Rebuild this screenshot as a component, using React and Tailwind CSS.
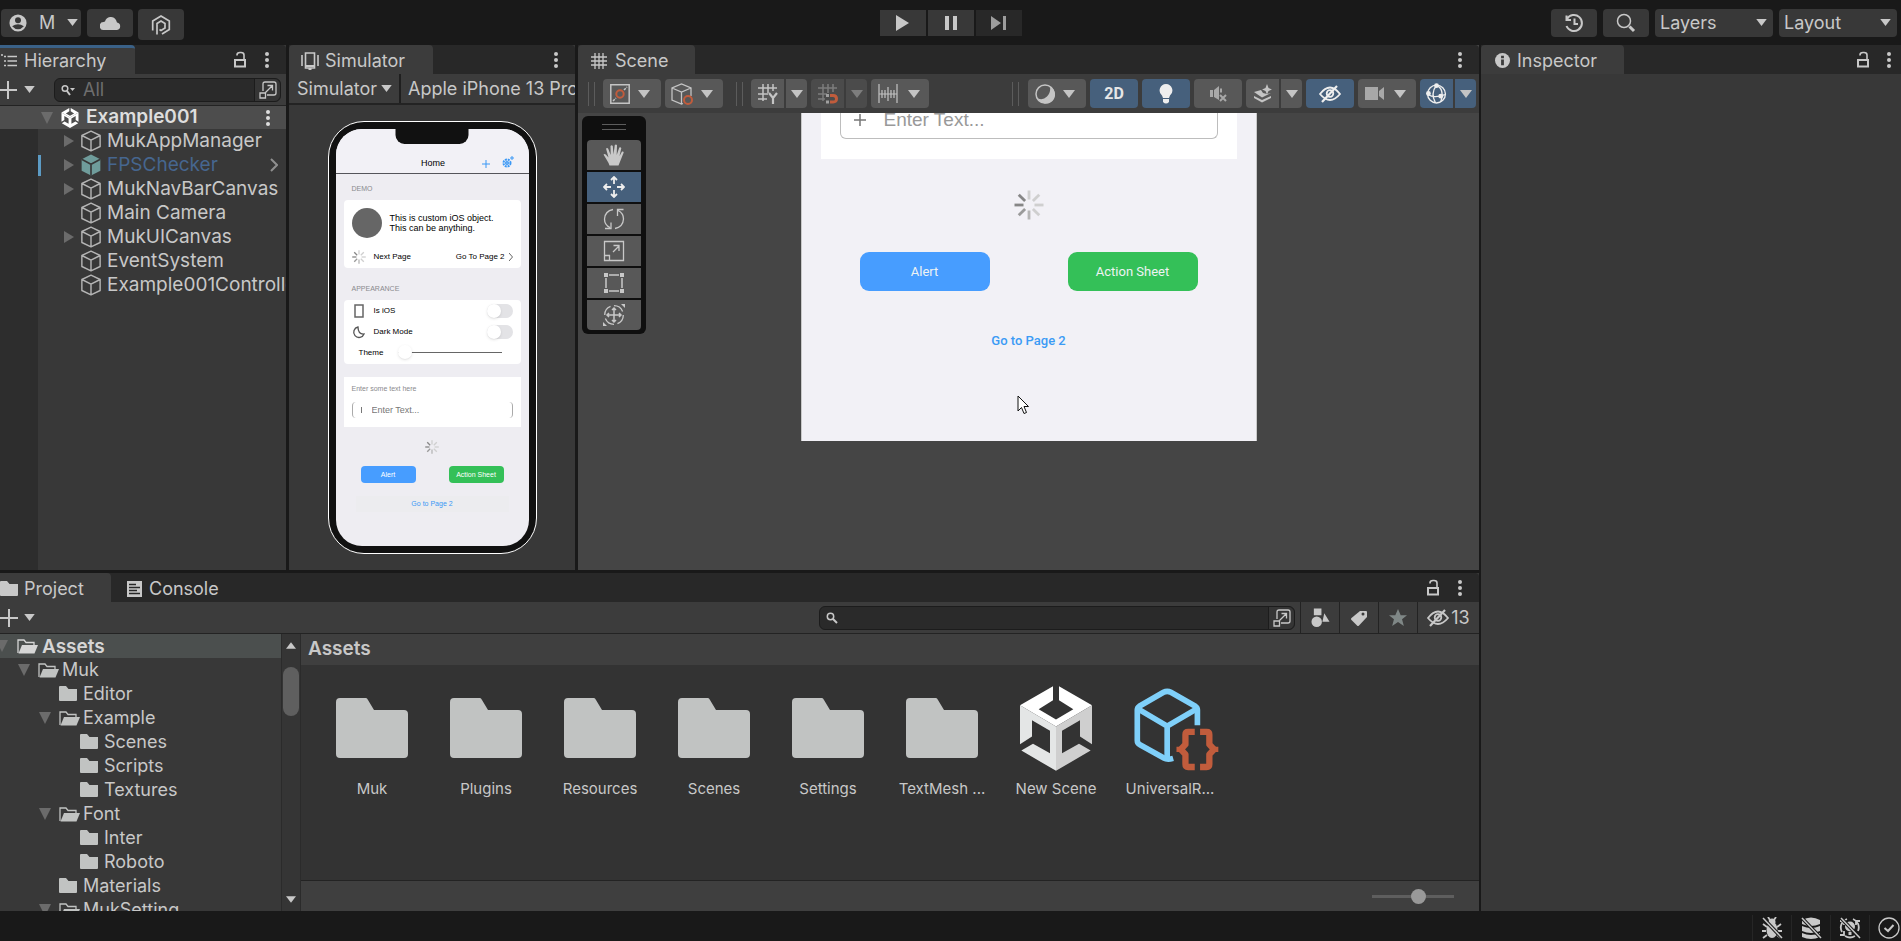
import React, { useState } from 'react'

const hierarchy = [
    { name: 'MukAppManager', open: true },
    { name: 'FPSChecker', open: true, prefab: true },
    { name: 'MukNavBarCanvas', open: true },
    { name: 'Main Camera' },
    { name: 'MukUICanvas', open: true },
    { name: 'EventSystem' },
    { name: 'Example001Controller' },
]

const tree = [
    { name: 'Muk', pad: 'pl-[18px]', open: true },
    { name: 'Editor', pad: 'pl-[39px]' },
    { name: 'Example', pad: 'pl-[39px]', open: true },
    { name: 'Scenes', pad: 'pl-[60px]' },
    { name: 'Scripts', pad: 'pl-[60px]' },
    { name: 'Textures', pad: 'pl-[60px]' },
    { name: 'Font', pad: 'pl-[39px]', open: true },
    { name: 'Inter', pad: 'pl-[60px]' },
    { name: 'Roboto', pad: 'pl-[60px]' },
    { name: 'Materials', pad: 'pl-[39px]' },
    { name: 'MukSetting', pad: 'pl-[39px]', open: true },
]

const folders = ['Muk', 'Plugins', 'Resources', 'Scenes', 'Settings', 'TextMesh ...']

/* ---------- icons ---------- */
function Svg({ box = '0 0 20 20', className = 'w-5 h-5', children, ...rest }) {
    return (
        <svg viewBox={box} className={'shrink-0 ' + className} fill="none" stroke="currentColor" strokeWidth="1.5" aria-hidden="true" {...rest}>
            {children}
        </svg>
    )
}

function Down({ className = 'w-[11px] h-[7px]' }) {
    return <Svg box="0 0 12 8" className={className}><path d="M0 0h12L6 8z" fill="currentColor" stroke="none" /></Svg>
}

function Fold({ open }) {
    return (
        <Svg box="0 0 12 12" className="w-3 h-3 text-[#6b6b6b]">
            <path d={open ? 'M0 0h12L6 12z' : 'M1 0l10 6-10 6z'} fill="currentColor" stroke="none" />
        </Svg>
    )
}

function Dots() {
    return (
        <Svg box="0 0 6 18" className="w-[6px] h-[18px]">
            <g fill="currentColor" stroke="none"><circle cx="3" cy="3" r="2" /><circle cx="3" cy="9" r="2" /><circle cx="3" cy="15" r="2" /></g>
        </Svg>
    )
}

function Lock() {
    return (
        <Svg box="0 0 14 18" className="w-[14px] h-[18px]" strokeWidth="2">
            <path d="M2 9h10v6.500H2z" /><path d="M4 4.500V4q0-2.500 3-2.500h1q3 0 3 2.500v5" strokeWidth="1.600" />
        </Svg>
    )
}

function Plus() {
    return <Svg box="0 0 18 18" className="w-[18px] h-[18px]" strokeWidth="2"><path d="M9 0v18M0 9h18" /></Svg>
}

function Cube({ prefab }) {
    if (prefab) {
        return (
            <Svg className="w-[22px] h-[22px] text-[#6f9c9b]">
                <path d="M10 .5l8.500 4.300v10.400L10 19.500l-8.500-4.300V4.800z" fill="currentColor" stroke="none" />
                <path d="M1.500 4.800L10 9.300l8.500-4.500M10 9.300v10.200" stroke="#383838" />
            </Svg>
        )
    }
    return (
        <Svg className="w-[22px] h-[22px]" strokeWidth="1.300">
            <path d="M10 1l8.300 4v10L10 19l-8.300-4V5zM1.700 5L10 9.300 18.300 5M10 9.300V19" strokeLinejoin="round" />
        </Svg>
    )
}

function UnityLogo({ className, flat }) {
    return (
        <Svg box="720 376 216 254" className={className} stroke="none">
            <path fill="#fff" d="M819 376v42l-43 27 52 31 52-31-43-27v-42l99 57-108 64-108-64z" />
            <path fill={flat ? '#fff' : '#e4e6e6'} d="M720 433l108 64v133l-104-61 35-20 51 28v-67l-54-32v49l-36 23z" />
            <path fill={flat ? '#fff' : '#cfcfcf'} d="M936 433l-108 64v133l104-61-35-20-51 28v-67l54-32v49l36 23z" />
        </Svg>
    )
}

function SmallFolder({ open }) {
    if (open) {
        return (
            <Svg box="0 0 21 16" className="w-[21px] h-4">
                <path d="M1 15V2h6l2 2.500h8V7" strokeWidth="1.300" /><path d="M5 7h16l-3.500 8.500H1.500z" fill="currentColor" stroke="none" />
            </Svg>
        )
    }
    return (
        <Svg box="0 0 18 15" className="w-[18px] h-[15px]" stroke="none">
            <path d="M0 1q0-1 1-1h6l2.500 3H18v11q0 1-1 1H1q-1 0-1-1z" fill="currentColor" />
        </Svg>
    )
}

function BigFolder() {
    return (
        <Svg box="0 0 72 60" className="w-[72px] h-[60px] text-[#c1c3c2]" stroke="none">
            <path d="M4 0h26q1 0 2 2l6 10h30q4 0 4 4v40q0 4-4 4H4q-4 0-4-4V4q0-4 4-4z" fill="currentColor" />
        </Svg>
    )
}

function PipelineIcon() {
    return (
        <Svg box="1024 376 292 256" className="w-[97px] h-[85px]">
            <g stroke="#7fd0fa" strokeWidth="17" strokeLinejoin="round">
                <path d="M1251 494v-46q0-7-6-11l-74-42q-11-6-22 0l-73 42q-6 4-6 11v92q0 9 8 13l72 40q10 6 28 1" />
                <path d="M1072 445l88 52 89-52M1160 497v95" />
            </g>
            <g stroke="#c15c3c" strokeWidth="19" strokeLinejoin="round">
                <path d="M1243 514h-20q-8 0-8 8v30l-14 15 14 15v30q0 8 8 8h20" /><path d="M1259 514h20q8 0 8 8v30l14 15-14 15v30q0 8-8 8h-20" />
                <path d="M1188 567h16M1298 567h16" strokeWidth="16" />
            </g>
        </Svg>
    )
}

function Magnifier({ menu }) {
    if (menu) {
        return (
            <Svg box="0 0 14 12" className="w-[14px] h-3">
                <circle cx="4" cy="4.500" r="2.800" /><path d="M6 7l3 4" strokeWidth="2" /><path d="M9 4h5l-2.500 3z" fill="currentColor" stroke="none" />
            </Svg>
        )
    }
    return <Svg box="0 0 12 12" className="w-3 h-3"><circle cx="4.500" cy="4.500" r="3.200" /><path d="M7 7l4 4" strokeWidth="2" /></Svg>
}

function Popout({ className = 'w-[18px] h-[18px]' }) {
    return (
        <Svg box="0 0 18 18" className={className} strokeWidth="1.300">
            <path d="M4 10V3q0-2 2-2h9q2 0 2 2v9q0 2-2 2H8" /><path d="M1 12h5.500v5H1zM6.500 11.500L13 5M8.500 4.500h5v5" />
        </Svg>
    )
}

function HiddenEye({ className = 'w-[22px] h-[18px]' }) {
    return (
        <Svg box="0 0 22 18" className={className} strokeWidth="1.800">
            <path d="M1 9q10-13 20 0-10 12-20 0z" /><circle cx="11" cy="8.500" r="3.300" /><path d="M3 17L18 1" strokeWidth="2.200" />
        </Svg>
    )
}

function Spinner({ className }) {
    const shades = ['#cfcfcf', '#cfcfcf', '#cfcfcf', '#cfcfcf', '#b5b5b5', '#9a9a9a', '#868686', '#868686']
    return (
        <Svg box="-15 -15 30 30" className={className} strokeWidth="2.800">
            {shades.map((c, i) => <path key={i} d="M0-5.500V-14.500" stroke={c} transform={`rotate(${i * 45})`} />)}
        </Svg>
    )
}

/* ---------- shared controls ---------- */
function DropDown({ label, value, className, arrow = 'right-3' }) {
    return (
        <div className={'relative flex items-center ' + className}>
            <select aria-label={label} className="appearance-none w-full h-full bg-transparent outline-none">
                <option>{value}</option>
            </select>
            <span className={'absolute pointer-events-none flex ' + arrow}><Down /></span>
        </div>
    )
}

function Tab({ icon, children, className }) {
    return (
        <button className={'flex items-center h-[29px] bg-[#3c3c3c] rounded-tr text-lg ' + className}>
            {icon}{children}
        </button>
    )
}

function TabBar({ children, lock }) {
    return (
        <div className="flex shrink-0 h-[29px] bg-[#282828] rounded-tr">
            {children}
            <div className="flex items-center gap-[17px] ml-auto pr-4">
                {lock && <button aria-label="Lock"><Lock /></button>}
                <button aria-label="Panel menu"><Dots /></button>
            </div>
        </div>
    )
}

function Tool({ label, on, dim, split, children, className = '' }) {
    const bg = on ? 'bg-[#46607c]' : dim ? 'bg-[#4b4b4b]' : 'bg-[#585858]'
    const color = dim ? 'text-[#7d7d7d]' : 'text-[#c4c4c4]'
    if (split) {
        return (
            <div className={'flex gap-[2px] h-[29px] ' + color}>
                <button aria-label={label} className={'flex items-center justify-center w-[33px] rounded-l-sm ' + bg}>{children}</button>
                <button aria-label={label + ' options'} className={'flex items-center justify-center w-[21px] rounded-r-sm ' + bg}><Down className="w-3 h-2" /></button>
            </div>
        )
    }
    return (
        <button aria-label={label} className={'flex items-center justify-center h-[29px] rounded-sm ' + bg + ' ' + color + ' ' + className}>
            {children}
        </button>
    )
}

function Handle() {
    return <div className="w-[7px] h-6 border-x border-[#5c5c5c]" />
}

/* ---------- panels ---------- */
function TopBar() {
    return (
        <header className="flex shrink-0 items-center h-[45px] pl-px pr-1 bg-[#191919] text-lg">
            <div className="flex flex-1 items-center gap-[5px]">
                <button className="flex items-center gap-3 h-7 w-20 pl-2 mr-px bg-[#383838] rounded-sm">
                    <Svg className="w-[18px] h-[18px]">
                        <circle cx="10" cy="10" r="9.500" fill="currentColor" stroke="none" />
                        <circle cx="10" cy="7" r="3.300" fill="#383838" stroke="none" /><path d="M3.500 13.500q6.500-4.500 13 0-6.500 7-13 0z" fill="#383838" stroke="none" />
                    </Svg>
                    M
                    <Down />
                </button>
                <button aria-label="Cloud" className="flex items-center justify-center h-7 w-[46px] bg-[#383838] rounded-sm">
                    <Svg box="0 0 21 15" className="w-[21px] h-[15px]" stroke="none"><path d="M4 15a4 4 0 0 1-.5-8L5 6.500A6 6 0 0 1 16 5l1 2.500a3.800 3.800 0 0 1 0 7.500z" fill="currentColor" /></Svg>
                </button>
                <button aria-label="Plastic SCM" className="flex items-center justify-center h-[31px] w-[46px] mt-1 bg-[#383838] rounded">
                    <Svg className="w-5 h-5" strokeWidth="1.700">
                        <path d="M1.700 15.500V6L10 1l8.300 5v8.500L11 19" /><path d="M6 19.500V8.500L10 6l4 2.500V13l-4 2.500L8.500 14.500" />
                    </Svg>
                </button>
            </div>
            <div className="flex items-center gap-[2px] ml-[3px]">
                <button aria-label="Play" className="flex items-center justify-center w-[46px] h-[26px] bg-[#383838]">
                    <Svg box="0 0 13 16" className="w-[13px] h-4" stroke="none"><path d="M0 0l13 8-13 8z" fill="currentColor" /></Svg>
                </button>
                <button aria-label="Pause" className="flex items-center justify-center w-[46px] h-[26px] bg-[#383838]">
                    <Svg box="0 0 12 16" className="w-3 h-4" stroke="none"><path d="M0 1h4v14H0zM8 1h4v14H8z" fill="currentColor" /></Svg>
                </button>
                <button aria-label="Step" className="flex items-center justify-center w-[46px] h-[26px] bg-[#282828] text-[#9d9d9d]">
                    <Svg box="0 0 15 16" className="w-[15px] h-4" stroke="none"><path d="M0 1l10 7-10 7zM12 1h3v14h-3z" fill="currentColor" /></Svg>
                </button>
            </div>
            <div className="flex flex-1 items-center justify-end gap-[6px]">
                <button aria-label="Undo history" className="flex items-center justify-center w-[46px] h-7 bg-[#383838] rounded-sm">
                    <Svg strokeWidth="2"><path d="M3 6a8 8 0 1 1-.5 7M2.500 2.500V7H7" /><path d="M10.500 5.500v5.500h3.500" /></Svg>
                </button>
                <button aria-label="Search" className="flex items-center justify-center w-[46px] h-7 bg-[#383838] rounded-sm">
                    <Svg><circle cx="8" cy="8" r="6.500" /><path d="M13.500 13.500L18 18" strokeWidth="3" /></Svg>
                </button>
                <DropDown label="Layers" value="Layers" className="w-[118px] h-7 pl-[5px] bg-[#383838] rounded-sm" arrow="right-[6px]" />
                <DropDown label="Layout" value="Layout" className="w-[118px] h-7 pl-[5px] bg-[#383838] rounded-sm" arrow="right-[6px]" />
            </div>
        </header>
    )
}

function Hierarchy() {
    return (
        <section className="flex flex-col shrink-0 w-[286px] bg-[#383838] overflow-hidden">
            <TabBar lock>
                <Tab className="w-[135px] gap-[7px] border-t-3 border-[#3a6187]" icon={
                    <Svg box="0 0 17 14" className="w-[17px] h-[14px]" strokeWidth="1.600"><path d="M1 1h2M4 2.500h2M7.500 2.500H17M4 7h2M7.500 7H17M4 11.500h2M7.500 11.500H17" /></Svg>
                }>Hierarchy</Tab>
            </TabBar>
            <div className="flex shrink-0 items-center h-8 pr-[5px] bg-[#3c3c3c] border-b border-[#232323]">
                <button aria-label="Add object" className="flex items-center gap-[7px] w-[54px] -ml-px mr-px"><Plus /><Down /></button>
                <div className="flex flex-1 items-center h-6 min-w-0 pl-[6px] bg-[#2a2a2a] border border-[#1c1c1c] rounded-md">
                    <Magnifier menu />
                    <input type="text" aria-label="Search hierarchy" placeholder="All" className="flex-1 min-w-0 pl-2 bg-transparent text-lg/6 placeholder:text-[#6e6e6e] outline-none" />
                    <button aria-label="Open search" className="flex items-center justify-center w-[26px] h-full bg-[#353535] border-l border-[#1c1c1c] rounded-r-md"><Popout /></button>
                </div>
            </div>
            <div className="flex shrink-0 items-center h-[23px] pl-[41px] pr-[15px] bg-[#4d4d4d] text-[19px] font-semibold text-[#dedede]">
                <Fold open />
                <UnityLogo flat className="w-[18px] h-5 ml-2 mr-[7px]" />
                <span className="flex-1">Example001</span>
                <button aria-label="Scene menu"><Dots /></button>
            </div>
            <ul className="flex-1 border-l-38 border-[#2d2d2d] text-[19px]">
                {hierarchy.map((item) => (
                    <li key={item.name} className={'relative flex items-center h-6 pl-[25px] pr-2 ' + (item.prefab ? 'text-[#46668f]' : '')}>
                        {item.prefab && <span className="absolute left-0 h-[21px] w-[3px] bg-[#5c9bc4]" />}
                        <span className="flex w-[17px] shrink-0">{item.open && <Fold />}</span>
                        <span className={item.prefab ? '' : 'text-[#b4b4b4]'}><Cube prefab={item.prefab} /></span>
                        <span className="flex-1 ml-[5px] -mr-2 overflow-hidden whitespace-nowrap">{item.name}</span>
                        {item.prefab && <Svg box="0 0 8 14" className="w-2 h-[14px] text-[#8f8f8f]" strokeWidth="2"><path d="M1 1l6 6-6 6" /></Svg>}
                    </li>
                ))}
            </ul>
        </section>
    )
}

function Phone() {
    const [ios, setIos] = useState(false)
    const [dark, setDark] = useState(false)
    const toggle = 'appearance-none w-[26px] h-[14px] rounded-full bg-[#e3e3e6] before:block before:w-[14px] before:h-[14px] before:rounded-full before:bg-white before:shadow checked:bg-green-500'
    return (
        <div className="w-[209px] h-[433px] p-[7px] mx-auto mt-4 rounded-[36px] border border-white bg-[#111] text-black text-[9px]/[10px] font-['Liberation_Sans',sans-serif]">
            <div className="relative flex flex-col h-full rounded-[26px] bg-[#eeedf2] overflow-hidden">
                <div className="absolute top-0 left-1/2 -translate-x-1/2 w-[73px] h-[15px] rounded-b-[9px] bg-[#111]" />
                <div className="flex items-end h-[45px] px-[21px] pb-[5px] bg-[#f2f1f6] border-b border-[#55555a]">
                    <span className="flex-1 pl-14 text-center">Home</span>
                    <button aria-label="Add" className="ml-7 mr-3 text-[#3b98f5]"><Svg box="0 0 8 8" className="w-2 h-2" strokeWidth="1"><path d="M4 0v8M0 4h8" /></Svg></button>
                    <button aria-label="Settings" className="-mr-[6px] text-[#3b98f5]">
                        <Svg box="0 0 12 12" className="w-3 h-3"><circle cx="5" cy="7" r="3.500" strokeWidth="2" strokeDasharray="2 .8" /><circle cx="5" cy="7" r="1.300" /><path d="M10 0v4M8 2h4" strokeWidth="1" /></Svg>
                    </button>
                </div>
                <div className="px-2">
                    <p className="mt-[10px] pl-2 text-[7px]/[10px] text-[#8a8a8e]">DEMO</p>
                    <div className="mt-[6px] px-2 pt-2 h-[68px] rounded bg-white">
                        <div className="flex items-center gap-2">
                            <div className="w-[30px] h-[30px] rounded-full bg-[#666]" />
                            <p>This is custom iOS object.<br />This can be anything.</p>
                        </div>
                        <div className="flex items-center mt-3">
                            <Spinner className="w-[14px] h-[14px]" />
                            <span className="ml-2 text-[8px]/[10px]">Next Page</span>
                            <a href="#page2" className="flex items-center gap-1 ml-auto text-[8px]/[10px]">Go To Page 2
                                <Svg box="0 0 4 8" className="w-1 h-2 text-[#666]" strokeWidth="1"><path d="M0 0l3.500 4L0 8" /></Svg>
                            </a>
                        </div>
                    </div>
                    <p className="mt-4 pl-2 text-[7px]/[10px] text-[#8a8a8e]">APPEARANCE</p>
                    <div className="mt-[6px] px-2 h-16 rounded bg-white text-[8px]/[10px]">
                        <label className="flex items-center h-[21px]">
                            <Svg box="0 0 14 14" className="w-[14px] h-[14px] mr-2 text-[#666]"><path d="M3 1h8v12H3z" /></Svg>
                            Is iOS
                            <input type="checkbox" className={toggle + ' ml-auto'} checked={ios} onChange={(e) => setIos(e.target.checked)} />
                        </label>
                        <label className="flex items-center h-[21px]">
                            <Svg box="0 0 14 14" className="w-[14px] h-[14px] mr-2 text-[#555]" strokeWidth="1.300"><path d="M6 2a5.300 5.300 0 1 0 6 7Q6 9.500 6 2z" /></Svg>
                            Dark Mode
                            <input type="checkbox" className={toggle + ' ml-auto'} checked={dark} onChange={(e) => setDark(e.target.checked)} />
                        </label>
                        <label className="flex items-center h-[21px] pl-[7px] pr-[11px]">
                            <span className="w-[39px]">Theme</span>
                            <input type="range" defaultValue="0" className="appearance-none flex-1 min-w-0 h-[14px] bg-transparent [&::-webkit-slider-runnable-track]:h-px [&::-webkit-slider-runnable-track]:bg-[#666] [&::-webkit-slider-thumb]:appearance-none [&::-webkit-slider-thumb]:w-[14px] [&::-webkit-slider-thumb]:h-[14px] [&::-webkit-slider-thumb]:-mt-[7px] [&::-webkit-slider-thumb]:rounded-full [&::-webkit-slider-thumb]:bg-white [&::-webkit-slider-thumb]:shadow" />
                        </label>
                    </div>
                    <div className="mt-[13px] px-2 pt-[7px] h-[50px] bg-white">
                        <label htmlFor="phone-text" className="block text-[7px]/[10px] text-[#8a8a8e]">Enter some text here</label>
                        <div className="flex items-center mt-2 h-4 px-[7px] rounded border-x border-[#aaa] text-[#777]">
                            <Svg box="0 0 4 6" className="w-1 h-[6px] mr-2" strokeWidth="1"><path d="M1.500 0v6" /></Svg>
                            <input id="phone-text" type="text" placeholder="Enter Text..." className="flex-1 min-w-0 bg-transparent text-[9px]/[10px] placeholder:text-[#777] outline-none" />
                        </div>
                    </div>
                    <Spinner className="w-[14px] h-[14px] mx-auto mt-[13px]" />
                    <div className="flex justify-between mt-3 px-[17px] text-[7px]/[10px] text-white">
                        <button className="w-[55px] h-[17px] rounded bg-[#479dff]">Alert</button>
                        <button className="w-[55px] h-[17px] rounded bg-[#34c058]">Action Sheet</button>
                    </div>
                    <button className="block w-[153px] h-4 mx-auto mt-[13px] bg-[#ececef] text-[7px]/[10px] text-[#3b98f5]">Go to Page 2</button>
                </div>
            </div>
        </div>
    )
}

function Simulator() {
    return (
        <section className="flex flex-col shrink-0 w-[286px] bg-[#383838] overflow-hidden">
            <TabBar>
                <Tab className="w-36 pl-3 pt-[2px] gap-[6px] rounded-t" icon={
                    <Svg box="0 0 18 18" className="w-[18px] h-[18px]" strokeWidth="1.600"><path d="M4.500 1h9v15h-9zM1 3v11M17 3v11" /><path d="M5 14h8M7.500 17h3" strokeWidth="2" /></Svg>
                }>Simulator</Tab>
            </TabBar>
            <div className="flex shrink-0 h-[31px] bg-[#3c3c3c] border-b-2 border-[#232323] text-lg">
                <DropDown label="View" value="Simulator" className="shrink-0 w-[112px] pl-2 border-r-2 border-[#1f1f1f]" arrow="right-[7px]" />
                <DropDown label="Device" value="Apple iPhone 13 Pro Max" className="shrink-0 w-[240px] pl-[7px]" />
            </div>
            <Phone />
        </section>
    )
}

function SceneTools() {
    const tools = [
        ['Hand', <path d="M6.500 21.500q-1-3-3-6L.5 10.500q1.300-1.200 2.500.3L5.500 13.500 3 4.500q1.500-1.200 2.200.3L7.700 11 7.500 2q1.200-1.300 2.300 0L10.500 10.500 11.800 1q1.500-1 2.200.3L13.700 11 16.300 3.500q1.500-.7 2 .7L16.500 12 19 7.500q1.700-.3 1.700 1L17.500 16.500 15.500 21.500z" fill="currentColor" stroke="none" />],
        ['Move', <path d="M11 8V1M8 4l3-3 3 3M11 14v7M8 18l3 3 3-3M8 11H1M4 8l-3 3 3 3M14 11h7M18 8l3 3-3 3" strokeWidth="1.800" />],
        ['Rotate', <path d="M10 1.500Q2 3 1.500 11q0 6 5.500 8.500M8 14.500v6H2M12 20.500q8-1.500 8.500-9.500 0-6-5.500-8.500M14.500 8V1.500H20.500" strokeWidth="1.300" />],
        ['Scale', <path d="M1.500 1.500h19v19h-19zM1.500 15.500h5v5M10 12l6-6M10.500 5.500H16V11" strokeWidth="1.300" />],
        ['Rect', <><path d="M6 3h10M6 19h10M3 6v10M19 6v10" strokeWidth="1.500" /><path d="M1 1h4v4H1zM17 1h4v4h-4zM1 17h4v4H1zM17 17h4v4h-4z" fill="currentColor" stroke="none" /></>],
        ['Transform', <><circle cx="11" cy="11" r="9.300" strokeWidth="1.300" strokeDasharray="11 3.500" /><path d="M11 4v14M4 11h14M9 6l2-2 2 2M9 16l2 2 2-2M6 9l-2 2 2 2M16 9l2 2-2 2" /><path d="M18 0h4v4zM0 18v4h4z" fill="currentColor" stroke="none" /></>],
    ]
    return (
        <div className="absolute left-1 top-[3px] flex flex-col items-center gap-[2px] w-16 pt-2 pb-1 bg-[#0f0f0f] rounded-md">
            <div className="w-6 h-[6px] mb-2 border-y border-[#5c5c5c]" />
            {tools.map(([name, art]) => (
                <button key={name} aria-label={name} className={'flex items-center justify-center w-[54px] h-[30px] first-of-type:rounded-t last-of-type:rounded-b ' + (name === 'Move' ? 'bg-[#46607c] text-[#eee]' : 'bg-[#585858]')}>
                    <Svg box="0 0 22 22" className="w-[22px] h-[22px]">{art}</Svg>
                </button>
            ))}
        </div>
    )
}

function Scene() {
    return (
        <section className="flex flex-col flex-1 min-w-0 bg-[#454545] overflow-hidden">
            <TabBar>
                <Tab className="w-[117px] pl-[13px] pt-[2px] gap-2 rounded-t" icon={
                    <Svg box="0 0 16 16" className="w-4 h-4" strokeWidth="1.300"><path d="M4 0v16M8 0v16M12 0v16M0 4h16M0 8h16M0 12h16" /></Svg>
                }>Scene</Tab>
            </TabBar>
            <div className="flex shrink-0 items-center gap-1 h-[39px] pl-1 pr-[3px] bg-[#3c3c3c]">
                <div className="flex items-center gap-1 pl-[6px]">
                    <Handle />
                    <Tool label="Pivot" className="w-[58px] gap-2 pr-1 ml-1">
                        <Svg><path d="M.8.800h18.400v18.400H.8z" /><path d="M3 17l3-3M14 6l3-3" strokeDasharray="2.500 1" /><circle cx="10" cy="10" r="3.700" stroke="#c15c3c" strokeWidth="2" /></Svg><Down className="w-3 h-2" />
                    </Tool>
                    <Tool label="Orientation" className="w-[58px] gap-2 pr-1">
                        <Svg box="0 0 22 22" className="w-[22px] h-[22px]" strokeWidth="1.300"><path d="M12 20.500L10.500 21 1 17V5l9.500-4L20 5v8M1 5l9.500 4L20 5M10.500 9v12" /><circle cx="17" cy="17" r="4" stroke="#c15c3c" strokeWidth="2" /></Svg><Down className="w-3 h-2" />
                    </Tool>
                    <div className="ml-[9px] mr-1"><Handle /></div>
                    <Tool split label="Grid">
                        <Svg><path d="M5 0v17M10 0v9M15 0v7M0 4h19M0 10h10M0 15h9" /><path d="M11 9l4 5 4-5M15 14v6" strokeWidth="2.200" /></Svg>
                    </Tool>
                    <Tool split dim label="Snap">
                        <Svg><path d="M5 0v17M10 0v9M15 0v8M0 4h19M0 10h9M0 15h7" /><path d="M8 11.500h3M8 18h3" strokeWidth="3" stroke="#a0a0a0" /><path d="M12 11.500h3q3.500 0 3.500 3.300T15 18h-3" stroke="#c15c3c" strokeWidth="3" /></Svg>
                    </Tool>
                    <Tool label="Increment" className="w-[58px] gap-[10px] pr-[2px]">
                        <Svg strokeWidth="1.200"><path d="M1 0v19M19 0v19M1 10h18M4 6v8M7 6v8M10 3v14M13 6v8M16 6v8" /></Svg><Down className="w-3 h-2" />
                    </Tool>
                </div>
                <div className="flex items-center gap-1 ml-auto">
                    <Handle />
                    <Tool label="Draw mode" className="w-[58px] gap-2 pr-1 ml-[5px]">
                        <Svg><circle cx="10" cy="10" r="9" /><path d="M15 2.500a9 9 0 1 1-12 12q5 2 9-2t3-10z" fill="currentColor" stroke="none" /></Svg><Down className="w-3 h-2" />
                    </Tool>
                    <Tool on label="2D" className="w-12 text-base font-bold"><span className="text-[#e6e6e6] font-['Roboto',sans-serif]">2D</span></Tool>
                    <Tool on label="Lighting" className="w-12">
                        <Svg box="0 0 14 20" className="w-[14px] h-5 text-[#eee]" stroke="none"><path d="M7 0a6.500 6.500 0 0 1 4 11.500L10 14H4l-1-2.500A6.500 6.500 0 0 1 7 0zM4 15h6v3q-3 3-6 0z" fill="currentColor" /></Svg>
                    </Tool>
                    <Tool label="Audio" className="w-12">
                        <Svg box="0 0 18 16" className="w-[18px] h-4 text-[#a8a8a8]"><path d="M1 4h3v7H1zM5 4l5-4v14l-5-3z" fill="currentColor" stroke="none" /><path d="M12 2.500v4M11 9l6 6M17 9l-6 6" strokeWidth="2" /></Svg>
                    </Tool>
                    <Tool split label="Effects">
                        <Svg stroke="none"><path d="M1 8l7-2 2 3 4 1 4-1-9 4.500zM1 12l8 4 9-4v2l-9 4.500L1 14z" fill="currentColor" /><path d="M14 0l1.500 4L19 5.500 15.500 7 14 10.500 12.500 7 9 5.500 12.500 4z" fill="currentColor" /></Svg>
                    </Tool>
                    <Tool on label="Visibility" className="w-12"><span className="text-[#eee]"><HiddenEye /></span></Tool>
                    <Tool label="Camera" className="w-[58px] gap-[10px] pr-1">
                        <Svg box="0 0 19 13" className="w-[19px] h-[13px] text-[#a8a8a8]" stroke="none"><path d="M0 0h13v13H0zM14 4l5-4v13l-5-4z" fill="currentColor" /></Svg><Down className="w-3 h-2" />
                    </Tool>
                    <Tool split on label="Gizmos">
                        <Svg className="w-[21px] h-[21px] text-[#eee]" strokeWidth="1.300"><circle cx="10" cy="10.500" r="8.500" /><path d="M10 2q-6 8-1 17M10 2q8 4 4 16M2 11q6 4 16 0" /><g fill="currentColor" stroke="none"><circle cx="10" cy="2.500" r="2.300" /><circle cx="2.300" cy="10" r="2.300" /><circle cx="14" cy="12.500" r="2.300" /></g></Svg>
                    </Tool>
                </div>
            </div>
            <div className="relative flex-1 overflow-hidden">
                <SceneTools />
                <div className="w-[456px] h-[328px] mx-auto px-[19px] bg-[#f2f1f6] border-x border-[#c9c9c9] text-[13px]/5">
                    <div className="h-[46px] px-[19px] bg-white">
                        <div className="flex items-center h-[26px] px-[13px] pb-3 border border-t-0 border-[#bdbdbd] rounded-b-md">
                            <Svg box="0 0 12 12" className="w-3 h-3 text-[#777]"><path d="M6 0v12M0 6h12" /></Svg>
                            <input type="text" aria-label="Enter Text" placeholder="Enter Text..." className="flex-1 min-w-0 pl-[18px] bg-transparent text-[19px]/5 placeholder:text-[#999] outline-none font-['Liberation_Sans',sans-serif]" />
                        </div>
                    </div>
                    <Spinner className="w-[30px] h-[30px] mx-auto mt-[31px]" />
                    <div className="flex justify-between mt-8 px-[39px] text-[#eef3f3] font-['Roboto',sans-serif]">
                        <button className="w-[130px] h-[39px] rounded-[9px] bg-[#479dff]">Alert</button>
                        <button className="w-[130px] h-[39px] rounded-[9px] bg-[#34c058]">Action Sheet</button>
                    </div>
                    <button className="block mx-auto mt-10 font-medium text-[#3b9bf5] font-['Roboto',sans-serif]">Go to Page 2</button>
                </div>
                <svg viewBox="0 0 12 20" className="absolute left-[439px] top-[282px] w-3 h-5" aria-hidden="true">
                    <path d="M1 1v15l3.500-3.500L7 18.500l2.500-1-2.500-6h4.500z" fill="#fff" stroke="#111" />
                </svg>
            </div>
        </section>
    )
}

function Project() {
    const [size, setSize] = useState(58)
    const cell = 'flex items-center justify-center h-[31px] border-l border-[#232323]'
    return (
        <section className="flex flex-col shrink-0 h-[338px] bg-[#383838] overflow-hidden">
            <TabBar lock>
                <Tab className="w-[111px] pt-[2px] gap-[6px]" icon={<SmallFolder />}>Project</Tab>
                <button className="flex items-center gap-[7px] pl-4 pt-[2px] text-lg">
                    <Svg box="0 0 15 16" className="w-[15px] h-4" stroke="none"><path d="M0 0h15v16H0z" fill="currentColor" /><path d="M2 3.500h7M2 6.500h11M2 9.500h8M2 12.500h11" stroke="#282828" strokeWidth="1.300" /></Svg>
                    Console
                </button>
            </TabBar>
            <div className="flex shrink-0 items-center h-8 bg-[#3c3c3c] border-b border-[#232323]">
                <button aria-label="Create asset" className="flex items-center gap-[6px]"><Plus /><Down /></button>
                <div className="flex items-center w-[476px] h-6 ml-auto mr-[5px] pl-[6px] bg-[#2a2a2a] border border-[#1c1c1c] rounded-md">
                    <Magnifier />
                    <input type="text" aria-label="Search project" className="flex-1 min-w-0 pl-2 bg-transparent text-lg/6 outline-none" />
                    <button aria-label="Open search" className="flex items-center justify-center w-[26px] h-full bg-[#353535] border-l border-[#1c1c1c] rounded-r-md"><Popout /></button>
                </div>
                <button aria-label="Search by type" className={cell + ' w-[39px]'}>
                    <Svg className="w-[19px] h-5" stroke="none"><path d="M3 0h8v7H3zM14 5l5.500 9H12z" fill="currentColor" /><circle cx="6" cy="14" r="5.500" fill="currentColor" /></Svg>
                </button>
                <button aria-label="Search by label" className={cell + ' w-[39px]'}>
                    <Svg box="0 0 16 16" className="w-4 h-4" stroke="none"><path d="M9 1h6q1 0 1 1v5l-8 8.500q-1 1-2 0L.5 10q-1-1 0-2z" fill="currentColor" /><circle cx="12" cy="4" r="1.500" fill="#3c3c3c" /></Svg>
                </button>
                <button aria-label="Save search" className={cell + ' w-[39px]'}>
                    <Svg className="w-[18px] h-[18px] text-[#7f8786]" stroke="none"><path d="M10 0l3 7h7l-5.500 4.500L16.500 19 10 14.500 3.500 19l2-7.500L0 7h7z" fill="currentColor" /></Svg>
                </button>
                <button aria-label="Hidden packages" className={cell + ' w-[62px] gap-[2px] text-lg'}><HiddenEye />13</button>
            </div>
            <div className="flex flex-1 min-h-0">
                <div className="w-[281px] overflow-hidden text-lg/[23px]">
                    <div className="flex items-center h-6 bg-[#4b4f4e] text-[19px]/[23px] font-semibold text-[#d6d6d6]">
                        <span className="flex w-[17px] -ml-1 mr-1"><Fold open /></span>
                        <SmallFolder open />
                        <span className="ml-1">Assets</span>
                    </div>
                    <ul>
                        {tree.map((node) => (
                            <li key={node.name} className={'flex items-center h-6 pb-px ' + node.pad}>
                                <span className="flex w-5 shrink-0">{node.open && <Fold open />}</span>
                                <span className="flex w-[21px] mr-[3px] text-[#c1c3c2]"><SmallFolder open={node.open} /></span>
                                {node.name}
                            </li>
                        ))}
                    </ul>
                </div>
                <div className="flex flex-col items-center w-5 py-2 border-x border-[#2b2b2b] bg-[#353535]">
                    <Svg box="0 0 12 8" className="w-[10px] h-[7px]" stroke="none"><path d="M0 8h12L6 0z" fill="currentColor" /></Svg>
                    <div className="w-4 h-[49px] mt-[18px] rounded-full bg-[#5f5f5f]" />
                    <span className="flex mt-auto"><Down className="w-[10px] h-[7px]" /></span>
                </div>
                <div className="flex flex-col flex-1 min-w-0">
                    <div className="flex items-center h-[31px] pl-[7px] bg-[#3f3f3f] text-[19px] font-semibold">Assets</div>
                    <ul className="flex flex-wrap content-start flex-1 min-h-0 pl-[14px] pt-5 bg-[#333] text-[15px]/5">
                        {folders.map((name) => (
                            <li key={name} className="flex flex-col items-center w-[114px]">
                                <span className="flex items-center h-[86px]"><BigFolder /></span>
                                <span className="mt-2">{name}</span>
                            </li>
                        ))}
                        <li className="flex flex-col items-center w-[114px]">
                            <span className="flex items-center h-[86px]"><UnityLogo className="w-[72px] h-[85px]" /></span>
                            <span className="mt-2">New Scene</span>
                        </li>
                        <li className="flex flex-col items-center w-[114px]">
                            <span className="flex items-center h-[86px]"><PipelineIcon /></span>
                            <span className="mt-2">UniversalR...</span>
                        </li>
                    </ul>
                    <div className="flex shrink-0 items-center justify-end h-[31px] pr-[25px] bg-[#3f3f3f] border-t border-[#232323]">
                        <input type="range" aria-label="Icon size" value={size} onChange={(e) => setSize(e.target.value)} className="appearance-none w-[82px] h-4 bg-transparent [&::-webkit-slider-runnable-track]:h-[3px] [&::-webkit-slider-runnable-track]:bg-[#5e5e5e] [&::-webkit-slider-thumb]:appearance-none [&::-webkit-slider-thumb]:w-[15px] [&::-webkit-slider-thumb]:h-[15px] [&::-webkit-slider-thumb]:-mt-[6px] [&::-webkit-slider-thumb]:rounded-full [&::-webkit-slider-thumb]:bg-[#999]" />
                    </div>
                </div>
            </div>
        </section>
    )
}

function Inspector() {
    return (
        <aside className="flex flex-col shrink-0 w-[420px] bg-[#383838]">
            <div className="flex shrink-0 h-[29px] bg-[#282828]">
                <Tab className="w-[143px] pl-[14px] pt-[2px] gap-[7px] rounded-t" icon={
                    <Svg box="0 0 16 16" className="w-[15px] h-[15px]" stroke="none"><circle cx="8" cy="8" r="8" fill="currentColor" /><path d="M6.500 3h3v2.500h-3zM6.500 7h3v6h-3z" fill="#3c3c3c" /></Svg>
                }>Inspector</Tab>
                <div className="flex items-center gap-4 ml-auto pr-[9px]">
                    <button aria-label="Lock"><Lock /></button>
                    <button aria-label="Panel menu"><Dots /></button>
                </div>
            </div>
        </aside>
    )
}

function StatusBar() {
    const cell = 'flex items-center justify-center w-[39px] h-full border-l border-[#262626]'
    return (
        <footer className="flex shrink-0 justify-end items-end h-[30px] pt-1 bg-[#191919] overflow-hidden">
            <button aria-label="Debugger" className={cell}>
                <Svg box="0 0 22 22" className="w-[22px] h-[22px]">
                    <ellipse cx="11" cy="13" rx="5.500" ry="8" fill="currentColor" stroke="none" /><circle cx="11" cy="5" r="3.500" fill="currentColor" stroke="none" />
                    <path d="M7 0l2 3M15 0l-2 3M6 10L2 7M5 14H1M6 18l-4 3M16 10l4-3M17 14h4M16 18l4 3" strokeWidth="1.800" />
                    <path d="M2 1l19 20" stroke="#191919" strokeWidth="3.500" /><path d="M2 1l19 20" />
                </Svg>
            </button>
            <button aria-label="Cache server" className={cell}>
                <Svg box="0 0 22 22" className="w-[22px] h-[22px]">
                    <path d="M2 3q9-5 18 0v4q-9 4-18 0zM2 9q9 4 18 0v5q-9 4-18 0zM2 16q9 4 18 0v4q-9 4-18 0z" fill="currentColor" stroke="none" />
                    <path d="M2 1l19 20" stroke="#191919" strokeWidth="3.500" /><path d="M2 1l19 20" />
                </Svg>
            </button>
            <button aria-label="Auto refresh" className={cell}>
                <Svg box="0 0 22 22" className="w-[22px] h-[22px]">
                    <path d="M8 2a9 9 0 0 0-5 13M14 2a9 9 0 0 1 5 12M6 19q5 3 10 0M1 4h4v4M21 4h-4v4M1 18h4v-4" strokeWidth="1.800" /><circle cx="11" cy="9.500" r="5" fill="currentColor" stroke="none" /><path d="M9.500 15h3v3h-3z" fill="currentColor" stroke="none" />
                    <path d="M2 1l19 20" stroke="#191919" strokeWidth="3.500" /><path d="M2 1l19 20" />
                </Svg>
            </button>
            <button aria-label="Progress" className="flex items-center w-8 h-full pl-2 border-l border-[#262626]">
                <Svg box="0 0 22 22" className="w-[22px] h-[22px]"><circle cx="11" cy="11" r="10" strokeWidth="1.300" /><path d="M6.500 11l3.500 3 5.500-6" strokeWidth="2" /></Svg>
            </button>
        </footer>
    )
}

export default function App() {
    return (
        <div className="flex flex-col h-screen bg-[#191919] text-[#c8c8c8] overflow-hidden font-['Inter',sans-serif]">
            <TopBar />
            <main className="flex flex-1 gap-[2px] min-h-0">
                <div className="flex flex-col flex-1 gap-[3px] min-w-0">
                    <div className="flex flex-1 gap-[3px] min-h-0">
                        <Hierarchy />
                        <Simulator />
                        <Scene />
                    </div>
                    <Project />
                </div>
                <Inspector />
            </main>
            <StatusBar />
        </div>
    )
}
